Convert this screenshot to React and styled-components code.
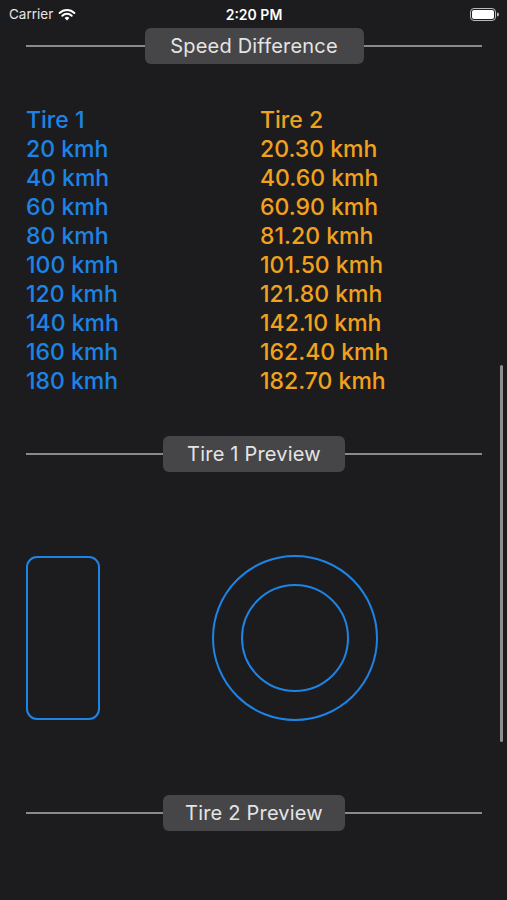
import React from "react";
import styled, { createGlobalStyle } from "styled-components";

const GlobalStyle = createGlobalStyle`
  html, body {
    margin: 0;
    padding: 0;
    background: #1c1c1e;
  }
  body {
    font-family: Inter, "Open Sans", "Liberation Sans", sans-serif;
    -webkit-font-smoothing: antialiased;
  }
`;

const Screen = styled.div`
  position: relative;
  width: 507px;
  height: 900px;
  overflow: hidden;
  background: #1c1c1e;
`;

const StatusBar = styled.div`
  height: 28px;
  display: grid;
  grid-template-columns: 1fr auto 1fr;
  align-items: center;
  padding: 0 8px 0 9px;
  color: #ffffff;
  font-size: 13.5px;
`;

const Carrier = styled.div`
  display: flex;
  align-items: center;
  gap: 5px;
  color: #e6e6e6;
`;

const Clock = styled.div`
  font-weight: 600;
  font-size: 14px;
`;

const Battery = styled.div`
  justify-self: end;
  display: flex;
  align-items: center;
`;

const SectionHeader = styled.div`
  display: flex;
  align-items: center;
  padding: 0 25px 0 26px;
  height: 36px;
`;

const Line = styled.div`
  flex: 1;
  height: 1.5px;
  background: #8a8a8c;
`;

const Pill = styled.div`
  height: 36px;
  display: flex;
  align-items: center;
  justify-content: center;
  width: ${(p) => p.$w}px;
  background: #464648;
  border-radius: 6px;
  color: #e4e4e4;
  font-size: 20px;
  letter-spacing: 0.2px;
`;

const Table = styled.div`
  display: grid;
  grid-template-columns: 234px 1fr;
  padding: 42px 26px 40px;
  font-size: 23px;
  line-height: 29px;
  font-weight: 500;
`;

const Cell = styled.div`
  color: ${(p) => (p.$tire === 2 ? "#f0a21e" : "#1d84e6")};
  white-space: nowrap;
`;

const Preview = styled.div`
  display: flex;
  align-items: center;
  gap: 111px;
  padding: 82px 26px 73px;
`;

const TireSide = styled.div`
  width: 74px;
  height: 164px;
  box-sizing: border-box;
  border: 2px solid #1d84e6;
  border-radius: 11px;
`;

const Scroller = styled.div`
  position: absolute;
  right: 4px;
  top: 365px;
  width: 3px;
  height: 377px;
  border-radius: 2px;
  background: #8e8e90;
`;

const speeds = [20, 40, 60, 80, 100, 120, 140, 160, 180];

const Header = ({ title, width }) => (
  <SectionHeader>
    <Line />
    <Pill $w={width}>{title}</Pill>
    <Line />
  </SectionHeader>
);

const App = () => {
  return (
    <Screen>
      <GlobalStyle />
      <StatusBar>
        <Carrier>
          Carrier
          <svg width="18" height="13" viewBox="0 0 18 13">
            <path d="M9 12.5 L6.6 10 A3.4 3.4 0 0 1 11.4 10 Z" fill="#fff" />
            <path d="M4.3 7.7 A6.7 6.7 0 0 1 13.7 7.7" stroke="#fff" strokeWidth="2" fill="none" strokeLinecap="round" />
            <path d="M1.6 5 A10.5 10.5 0 0 1 16.4 5" stroke="#fff" strokeWidth="2" fill="none" strokeLinecap="round" />
          </svg>
        </Carrier>
        <Clock>2:20 PM</Clock>
        <Battery>
          <svg width="29" height="13" viewBox="0 0 29 13">
            <rect x="0.5" y="0.5" width="25" height="12" rx="3.5" fill="none" stroke="#bbb" />
            <rect x="2" y="2" width="22" height="9" rx="2" fill="#fff" />
            <path d="M27 4.5 A2 2 0 0 1 27 8.5 Z" fill="#bbb" />
          </svg>
        </Battery>
      </StatusBar>

      <Header title="Speed Difference" width={219} />

      <Table>
        <Cell $tire={1}>Tire 1</Cell>
        <Cell $tire={2}>Tire 2</Cell>
        {speeds.map((s) => (
          <React.Fragment key={s}>
            <Cell $tire={1}>{s} kmh</Cell>
            <Cell $tire={2}>{(s * 1.015).toFixed(2)} kmh</Cell>
          </React.Fragment>
        ))}
      </Table>

      <Header title="Tire 1 Preview" width={182} />

      <Preview>
        <TireSide />
        <svg width="168" height="168" viewBox="0 0 168 168">
          <circle cx="84" cy="84" r="82" fill="none" stroke="#1d84e6" strokeWidth="2" />
          <circle cx="84" cy="84" r="53" fill="none" stroke="#1d84e6" strokeWidth="2" />
        </svg>
      </Preview>

      <Header title="Tire 2 Preview" width={182} />

      <Scroller />
    </Screen>
  );
};

export default App;
